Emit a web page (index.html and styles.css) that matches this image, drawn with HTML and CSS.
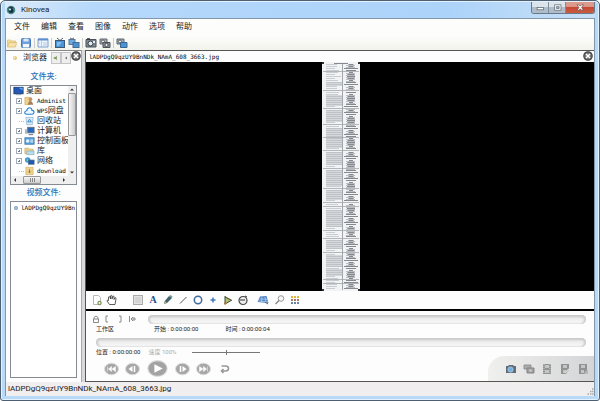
FILE: index.html
```html
<!DOCTYPE html>
<html lang="zh-CN">
<head>
<meta charset="utf-8">
<title>Kinovea</title>
<link rel="stylesheet" href="styles.css">
</head>
<body>
<div class="window">
  <header class="titlebar">
    <svg class="app-icon" viewBox="0 0 10 10"><circle cx="5" cy="5" r="4.3" fill="#4b8c91"/><path d="M1 4Q5-1 9 4L7 3H3z" fill="#23383d"/><circle cx="5" cy="5.5" r="2.5" fill="#17343d"/><circle cx="4" cy="4.5" r="1" fill="#dff"/></svg>
    <h1>Kinovea</h1>
    <div class="winbuttons">
      <button aria-label="最小化"><svg viewBox="0 0 16 12"><rect x="4.500" y="6" width="7" height="2.500" fill="#fff" stroke="#5c6670" stroke-width=".8"/></svg></button>
      <button aria-label="最大化"><svg viewBox="0 0 16 12"><path d="M5 3h7v6H5zM7 5h3v2H7z" fill="#fff" fill-rule="evenodd" stroke="#5c6670" stroke-width=".8"/></svg></button>
      <button class="shut" aria-label="关闭"><svg viewBox="0 0 28 12"><path d="M11 3h2l1.500 1.500L16 3h2l-2 3 2 3h-2l-1.500-1.500L13 9h-2l2-3z" fill="#fff" stroke="#5a4a50" stroke-width=".7"/></svg></button>
    </div>
  </header>
  <div class="client">
    <nav class="menu">
      <button>文件</button><button>编辑</button><button>查看</button><button>图像</button><button>动作</button><button>选项</button><button>帮助</button>
    </nav>
    <div class="toolbar">
      <button aria-label="打开"><svg viewBox="0 0 12 12"><path d="M1.500 9.500V3h3l1 1h4v1.500" fill="#f3dc9c" stroke="#dcc07b" stroke-width=".8"/><path d="M1.500 10l1.500-4.500h7.500l-1 4.500z" fill="#f6e2a8" stroke="#d9bd74" stroke-width=".8"/></svg></button>
      <button aria-label="保存"><svg viewBox="0 0 12 12"><rect x="1.500" y="1.500" width="9" height="9" rx="1" fill="#6d9fdc" stroke="#4377b8"/><path d="M3.500 1.500h5v3h-5z" fill="#d9e9fb"/><path d="M3 7h6v3.500H3z" fill="#f4f8fd"/></svg></button>
      <i class="sep"></i>
      <button aria-label="浏览器"><svg viewBox="0 0 12 12"><path d="M1 2h10v8H1z" fill="#eef5fd" stroke="#7ba0cf"/><path d="M1 2.500h10" stroke="#5e8fd0" stroke-width="2"/><path d="M4.500 4v6M2 6h1M6 6h4M6 8h4" stroke="#9cb7d8" stroke-width=".7"/></svg></button>
      <i class="sep"></i>
      <button aria-label="单屏"><svg viewBox="0 0 12 12"><path d="M3 1l3 2.500L9 1" fill="none" stroke="#56616d"/><rect x="1.500" y="3.500" width="9" height="7" fill="#4a93d4" stroke="#3c5a75"/><path d="M3 5h5l-3 4H3z" fill="#82bdf0"/></svg></button>
      <button aria-label="双屏"><svg viewBox="0 0 12 12"><rect x="1" y="2.500" width="6" height="5" fill="#6dabe2" stroke="#577899"/><rect x="5" y="5.500" width="6" height="5" fill="#4a93d4" stroke="#466b8c"/><path d="M2 1l2 1 2-1" fill="none" stroke="#667"/></svg></button>
      <i class="sep"></i>
      <button aria-label="单摄像头"><svg viewBox="0 0 12 12"><path d="M1 2.500h10V10H1z" fill="#7e8893" stroke="#49525b"/><path d="M2 2h3" stroke="#333" stroke-width="1.500"/><circle cx="5.500" cy="6.500" r="2.500" fill="#dfe6ec" stroke="#343c44"/><path d="M8 4h2v2H8z" fill="#e5ebf0"/></svg></button>
      <button aria-label="双摄像头"><svg viewBox="0 0 12 12"><path d="M1 2h7v5H1z" fill="#a2a9b0" stroke="#626a72"/><circle cx="4" cy="4.500" r="1.500" fill="#eee" stroke="#444" stroke-width=".7"/><path d="M4 5.500h7V10.500H4z" fill="#8b949c" stroke="#4a535b"/><circle cx="7.500" cy="8" r="1.600" fill="#eee" stroke="#333" stroke-width=".8"/></svg></button>
      <i class="sep"></i>
      <button aria-label="混合"><svg viewBox="0 0 12 12"><path d="M1 2h7v5H1z" fill="#9fa8b0" stroke="#5f6972"/><circle cx="4" cy="4.500" r="1.500" fill="#eee" stroke="#444" stroke-width=".7"/><path d="M4.500 5.500h6.500v5H4.500z" fill="#4a93d4" stroke="#3d668d"/></svg></button>
    </div>
    <main class="work">
      <aside class="explorer">
        <div class="tabs">
          <button class="tab"><svg viewBox="0 0 6 6"><circle cx="3" cy="3" r="2" fill="#e5c77a"/><circle cx="2.500" cy="2.500" r="1" fill="#f7e7b8"/></svg>浏览器</button>
          <button class="tab next" aria-label="快捷方式"><svg viewBox="0 0 6 8"><path d="M0 3h2l2-2v6L2 5H0z" fill="#78904f"/></svg></button>
          <button class="tab next" aria-label="向左"><svg viewBox="0 0 6 8"><path d="M4 2v4L2 4z" fill="#445"/></svg></button>
          <button class="close" aria-label="关闭面板"><svg viewBox="0 0 10 10"><circle cx="5" cy="5" r="4.200" fill="#777" stroke="#444" stroke-width="1.200"/><path d="M3 3l4 4M7 3L3 7" stroke="#fff" stroke-width="1.500"/></svg></button>
        </div>
        <h2>文件夹:</h2>
        <div class="treebox">
          <ul class="tree">
            <li class="root"><svg viewBox="0 0 12 10"><rect x="1" y="1" width="10" height="7" fill="#2458b5" stroke="#183b7d"/><path d="M6 1.500h4.500v3z" fill="#6ba4ef"/><path d="M3 9h6" stroke="#89a"/></svg>桌面</li>
            <li><i class="plus"></i><svg viewBox="0 0 12 10"><path d="M1 1h5v8H1z" fill="#eed28c" stroke="#c9a75b" stroke-width=".7"/><circle cx="7" cy="3" r="2" fill="#c99161"/><path d="M4 9q1-4 3-4t3 4z" fill="#a48058"/></svg><span class="mono">Administ</span></li>
            <li><i class="plus"></i><svg viewBox="0 0 12 10"><path d="M3 8.500C0 8.500 0 5 3 4.800 3.500 0 9 1 8.500 4c3 0 3.500 4.500 0 4.500z" fill="#eef8ff" stroke="#2680cf" stroke-width="1.200"/></svg><span class="mono">WPS</span>网盘</li>
            <li><i class="stub"></i><svg viewBox="0 0 12 10"><path d="M2 1h8L9 9H3z" fill="#dcecf8" stroke="#8ab0ce" stroke-width=".8"/><path d="M6 3l2 3H4z" fill="none" stroke="#3387cc"/></svg>回收站</li>
            <li><i class="plus"></i><svg viewBox="0 0 12 10"><rect x="4" y="1" width="7" height="6" fill="#2766bd" stroke="#5f7186"/><path d="M1 3h2.500v5H1z" fill="#aeb8c1"/><path d="M5 9h5" stroke="#567"/></svg>计算机</li>
            <li><i class="plus"></i><svg viewBox="0 0 12 10"><rect x="1" y="1.500" width="10" height="7" fill="#55a3df" stroke="#477ca9"/><circle cx="4" cy="5" r="2" fill="#dcf0ff"/><path d="M7 4h3M7 6h3" stroke="#fff"/></svg>控制面板</li>
            <li><i class="plus"></i><svg viewBox="0 0 12 10"><path d="M1 2h4l1 1h4v5H1z" fill="#efd287" stroke="#c4a456" stroke-width=".7"/><path d="M3 5h8v4H3z" fill="#b9dbea" stroke="#77a2b8" stroke-width=".6"/></svg>库</li>
            <li><i class="plus"></i><svg viewBox="0 0 12 10"><circle cx="4" cy="4" r="3" fill="#3c97d8"/><rect x="5" y="4" width="6" height="4.500" fill="#1d5cb5" stroke="#45627f" stroke-width=".8"/><path d="M3 2l2 2-2 2" fill="#7bce83"/></svg>网络</li>
            <li><i class="stub"></i><svg viewBox="0 0 12 10"><path d="M2 1h8v8H2z" fill="#efd48f" stroke="#cfae62" stroke-width=".7"/><path d="M6 3v4M4.500 5.500L6 7l1.500-1.500" fill="none" stroke="#9a772f"/></svg><span class="mono">download</span></li>
          </ul>
          <div class="vscroll"><svg viewBox="0 0 8 6"><path d="M2 4h4L4 2z" fill="#333"/></svg><i class="thumb"></i><svg class="end" viewBox="0 0 8 6"><path d="M2 2h4L4 4z" fill="#333"/></svg></div>
          <div class="hscroll"><svg viewBox="0 0 8 8"><path d="M5 2v4L3 4z" fill="#333"/></svg><i class="thumb"></i><svg class="end" viewBox="0 0 8 8"><path d="M3 2v4l2-2z" fill="#333"/></svg></div>
        </div>
        <h2>视频文件:</h2>
        <ul class="files"><li><svg viewBox="0 0 6 6"><circle cx="3" cy="3" r="2" fill="#7f9dba"/><circle cx="3" cy="3" r=".8" fill="#dbe8f3"/></svg><span class="mono">lADPDgQ9qzUY9Bn</span></li></ul>
      </aside>
      <section class="player">
        <div class="filebar">
          <span class="mono">lADPDgQ9qzUY9BnNDk_NAmA_608_3663.jpg</span>
          <button class="close" aria-label="关闭文件"><svg viewBox="0 0 10 10"><circle cx="5" cy="5" r="4.200" fill="#777" stroke="#444" stroke-width="1.200"/><path d="M3 3l4 4M7 3L3 7" stroke="#fff" stroke-width="1.500"/></svg></button>
        </div>
        <div class="viewer"><svg id="sheet" viewBox="0 0 38 229" preserveAspectRatio="none"></svg></div>
        <div class="drawtools">
          <button aria-label="新建关键帧"><svg viewBox="0 0 12 12"><path d="M2.500 1.500h5l2 2v7h-7z" fill="#fff" stroke="#b9b9b9"/><circle cx="8.500" cy="9" r="2.200" fill="#7c9155"/><path d="M8.500 7.800v2.400M7.300 9h2.400" stroke="#fff" stroke-width=".8"/></svg></button>
          <button class="hand" aria-label="移动"><svg viewBox="0 0 12 12"><path d="M3.500 10.500L1 7q0-1.500 1.500-.5L2.500 3q1-1 1.500 0l.5 2V1.800q1-1 1.500 0V5l.8-2.800q1-.7 1.200.5L8 5.500l1-1.800q1.200-.2 1 1L9 10.500z" fill="#fff" stroke="#333" stroke-width=".8"/></svg></button>
          <button aria-label="注释"><svg viewBox="0 0 12 12"><rect x="1.500" y="1.500" width="9" height="9" fill="#e4e4e4" stroke="#aaa"/><path d="M3 4h6M3 6h6M3 8h6" stroke="#bbb" stroke-width=".8"/></svg></button>
          <button class="letter" aria-label="文字">A</button>
          <button aria-label="铅笔"><svg viewBox="0 0 12 12"><path d="M2 10l.8-3L7 2l3 2-5 5z" fill="#3f626b"/><path d="M7 2l3 2 .5-1.500L8.500 1z" fill="#73989c"/><path d="M2 10l.8-3L5 9z" fill="#b9b189"/></svg></button>
          <button aria-label="直线"><svg viewBox="0 0 12 12"><path d="M3 9.500L9.500 3" stroke="#555"/></svg></button>
          <button aria-label="圆"><svg viewBox="0 0 12 12"><circle cx="6" cy="6" r="3.700" fill="none" stroke="#416b9f" stroke-width="1.500"/></svg></button>
          <button aria-label="标记"><svg viewBox="0 0 12 12"><path d="M6 3.500v5M3.500 6h5" stroke="#3f7ab9" stroke-width="1.500"/></svg></button>
          <button aria-label="角度"><svg viewBox="0 0 12 12"><path d="M3 2v8l7-4M3 3l6 3" fill="#b6bd70" stroke="#424a38"/><path d="M2 9.500h2" stroke="#b57930" stroke-width="2"/></svg></button>
          <button aria-label="秒表"><svg viewBox="0 0 12 12"><circle cx="6" cy="6.500" r="4" fill="#eee" stroke="#444" stroke-width="1.200"/><path d="M3 6h5M8 2l2 1" stroke="#333"/></svg></button>
          <button class="grid" aria-label="网格"><svg viewBox="0 0 12 12"><path d="M3 2.500l6.500-.5 2 7-6-.5-5-.5z" fill="#4f82c2"/><path d="M2.500 5l8 .2M1.500 7l9.500.8M5 3L4.500 8M8 3l1 6" stroke="#d4e3f5" stroke-width=".6"/><path d="M8 8l3 2" stroke="#456"/></svg></button>
          <button aria-label="放大镜"><svg viewBox="0 0 12 12"><circle cx="7" cy="4.500" r="2.800" fill="#f7f7f7" stroke="#999"/><path d="M5 6.500L1.500 10" stroke="#888" stroke-width="1.400"/></svg></button>
          <button aria-label="颜色配置"><svg viewBox="0 0 12 12" stroke-width="2" stroke-dasharray="2 1"><path d="M2 3h8" stroke="#dfb33c"/><path d="M2 6h8" stroke="#a67865"/><path d="M2 9h8" stroke="#6a83a2"/></svg></button>
        </div>
        <div class="controls">
          <div class="row zone">
            <svg viewBox="0 0 48 12" class="zonemarks"><g fill="none" stroke="#8a8a8a"><path d="M4 6V4.500Q6 1.500 8 4.500V6M3.500 6h5v3.500h-5z"/><path d="M18 3h-2v6h2M29 3h2v6h-2M39.500 3v6M41 6h5M43 4L41 6l2 2M44 4v4"/></g></svg>
            <div class="groove"></div>
          </div>
          <div class="labels first"><span>工作区</span><span>开始 : 0:00:00:00</span><span>时间 : 0:00:00:04</span></div>
          <div class="groove"></div>
          <div class="labels second"><span>位置 : 0:00:00:00</span><label for="speed">速度 100%</label><input id="speed" type="range" min="0" max="200" value="100"></div>
          <div class="transport">
            <button aria-label="首帧"><svg viewBox="0 0 16 14"><ellipse cx="8" cy="7" rx="7" ry="5.800" fill="#a7a7a7" stroke="#ddd"/><path d="M4 4.500v5M8 4.500v5L5 7zM12 4.500v5L8.500 7z" fill="#fff" stroke="#fff" stroke-width=".5"/></svg></button>
            <button aria-label="上一帧"><svg viewBox="0 0 16 14"><ellipse cx="8" cy="7" rx="7" ry="5.800" fill="#a7a7a7" stroke="#ddd"/><path d="M8 4v6L4 7z" fill="#fff"/><path d="M10 4v6" stroke="#fff" stroke-width="1.500"/></svg></button>
            <button class="play" aria-label="播放"><svg viewBox="0 0 20 18"><ellipse cx="10" cy="9" rx="9.200" ry="7.500" fill="#a3a3a3" stroke="#ddd"/><path d="M7 5l8 4-8 4z" fill="#fff"/></svg></button>
            <button aria-label="下一帧"><svg viewBox="0 0 16 14"><ellipse cx="8" cy="7" rx="7" ry="5.800" fill="#a7a7a7" stroke="#ddd"/><path d="M8 4v6l4-3z" fill="#fff"/><path d="M6 4v6" stroke="#fff" stroke-width="1.500"/></svg></button>
            <button aria-label="末帧"><svg viewBox="0 0 16 14"><ellipse cx="8" cy="7" rx="7" ry="5.800" fill="#a7a7a7" stroke="#ddd"/><path d="M12 4.500v5M8 4.500v5L11 7zM4 4.500v5L7.500 7z" fill="#fff" stroke="#fff" stroke-width=".5"/></svg></button>
            <button aria-label="循环"><svg viewBox="0 0 16 14"><path d="M5 4h4q3 0 3 2.500T9 9H5M7 7L5 9l2 2" fill="none" stroke="#999" stroke-width="1.600"/></svg></button>
            <div class="exports">
              <button aria-label="快照"><svg viewBox="0 0 12 12"><path d="M1 3h2l1-1h4l1 1h2v7H1z" fill="#626c76"/><circle cx="5.500" cy="6.500" r="2.600" fill="#72afe3" stroke="#bcd8ef" stroke-width=".7"/></svg></button>
              <button aria-label="连拍"><svg viewBox="0 0 12 12"><path d="M1 2h7v4H1z" fill="#aaa" stroke="#929292"/><path d="M4 5h7v5H4z" fill="#a0a0a0" stroke="#858585"/><circle cx="7.500" cy="7.500" r="1.300" fill="#ccc"/></svg></button>
              <button aria-label="视频"><svg viewBox="0 0 12 12"><path d="M2 1h8v10H2z" fill="#929292"/><path d="M4 2h4v3H4zM4 7h4v3H4z" fill="#c5c5c5"/><path d="M3 1v10M9 1v10" stroke="#ddd" stroke-width=".8" stroke-dasharray="1 1"/></svg></button>
              <button aria-label="幻灯片"><svg viewBox="0 0 12 12"><path d="M2 1h8v6l-3 4H2z" fill="#929292"/><path d="M4 2h4v3H4zM4 7h3v3H4z" fill="#c5c5c5"/><path d="M6 10l4-4" stroke="#ddd" stroke-width="1.200"/></svg></button>
              <button aria-label="暂停视频"><svg viewBox="0 0 12 12"><path d="M2 1h8v6l-3 4H2z" fill="#929292"/><path d="M4 2h4v3H4zM4 7h3v3H4z" fill="#c5c5c5"/><path d="M8 7v4M10 7v4" stroke="#999"/></svg></button>
            </div>
          </div>
        </div>
      </section>
    </main>
    <footer class="status"><span>lADPDgQ9qzUY9BnNDk_NAmA_608_3663.jpg</span><svg viewBox="0 0 8 8"><path d="M6 1h1.500M4 3.500h1.500M6 3.500h1.500M1.500 6h1.500M4 6h1.500M6 6h1.500" stroke="#aaa" stroke-width="1.300"/></svg></footer>
  </div>
</div>
<script src="script.js"></script>
</body>
</html>
```
FILE: styles.css
```css
* { box-sizing: border-box; }
body { margin: 0; font: 8px/10px Roboto, "Noto Sans CJK SC", sans-serif; color: #222; background: #fff; }
button { font: inherit; color: inherit; background: none; border: 0; padding: 0; margin: 0; display: flex; align-items: center; justify-content: center; }
svg { display: block; }
h1, h2, ul { margin: 0; padding: 0; font-size: 8px; font-weight: 400; list-style: none; }
.mono { font-family: "DejaVu Sans Mono", monospace; font-size: 6px; color: #000; white-space: nowrap; }

.window { height: 100vh; display: flex; flex-direction: column; padding: 1px 4px 4px; border: 1px solid #4d5f70; border-radius: 5px 5px 3px 3px; background: #b9d9f8; box-shadow: inset 0 0 0 1px #e4f2fd; }
.titlebar { height: 16px; flex: none; display: flex; align-items: center; background: linear-gradient(90deg, #dcebfa, #b5d8fb 15%, #acd3fa 75%, #c8e0f6); }
.app-icon { width: 10px; height: 10px; margin: 0 5px 0 1px; }
.titlebar h1 { flex: 1; }
.winbuttons { display: flex; align-self: flex-start; border: 1px solid #68798a; border-top: 0; border-radius: 0 0 3px 3px; overflow: hidden; }
.winbuttons button { width: 17px; height: 11px; background: linear-gradient(#dce4eb 45%, #aebdc9 50%); border-right: 1px solid #7f8e9c; }
.winbuttons svg { height: 11px; }
.winbuttons .shut { width: 28px; border: 0; background: linear-gradient(#dc9a8d 40%, #c54a35 50%, #c95b40); }

.client { flex: 1; min-height: 0; display: flex; flex-direction: column; border: 1px solid #8297aa; border-bottom: 0; background: #fdfdfc; }
.menu { display: flex; gap: 11px; padding: 0 8px; height: 16px; flex: none; }
.toolbar { display: flex; align-items: center; gap: 2px; height: 15px; flex: none; background: linear-gradient(#fdfdfc, #f3f3ed); }
.toolbar svg { width: 12px; height: 12px; }
.sep { width: 1px; height: 10px; background: #ccc; }

.work { flex: 1; min-height: 0; display: flex; gap: 3px; background: #d7d9dc; }
.explorer { width: 76px; flex: none; display: flex; flex-direction: column; padding: 0 4px 4px; border-top: 1px solid #888; border-right: 1px solid #aaa; background: #fdfdfd; }
.tabs { display: flex; align-items: center; height: 14px; flex: none; margin: 0 -4px 4px 0; }
.tab { gap: 5px; height: 12px; padding-left: 2px; }
.tab svg { width: 6px; height: 6px; }
.tab.next { padding: 0 1px; border: 1px solid #c5c5c5; background: #eee; }
.tab:nth-child(2) { margin-left: 4px; }
.close { align-self: flex-start; }
.close svg { width: 10px; height: 10px; }
.explorer h2 { height: 16px; flex: none; display: flex; align-items: center; justify-content: center; font-weight: 500; color: #2d72b5; }
.tree, .files { overflow: hidden; background: #fff; }
.treebox { display: grid; grid-template: 1fr 8px / 1fr 8px; height: 100px; flex: none; border: 1px solid #848b92; }
.tree li { display: flex; align-items: center; height: 10px; white-space: nowrap; }
.tree svg { width: 11px; height: 10px; margin-right: 2px; flex: none; }
.tree .root svg { margin-left: 2px; }
.plus { width: 6px; height: 6px; margin: 0 2px 0 5px; flex: none; border: 1px solid #a2adb8; background: linear-gradient(#68809c, #68809c) center / 2px 1px no-repeat, linear-gradient(#68809c, #68809c) center / 1px 2px no-repeat, #fff; }
.stub { width: 5px; height: 1px; margin: 0 0 0 8px; flex: none; border-top: 1px dotted #bbb; }
.vscroll, .hscroll { display: flex; background: #efefef; }
.vscroll { flex-direction: column; }
.vscroll svg { width: 8px; height: 7px; }
.hscroll svg { width: 8px; height: 8px; }
.thumb { border: 1px solid #999; border-radius: 1px; }
.vscroll .thumb { height: 43px; background: linear-gradient(90deg, #f7f7f7, #ccc); }
.hscroll { grid-column: 1 / 3; padding-right: 8px; }
.hscroll .thumb { width: 18px; margin-left: 4px; background: repeating-linear-gradient(90deg, #888 0 1px, transparent 1px 2px) center / 5px 4px no-repeat, linear-gradient(#f7f7f7, #ccc); }
.vscroll .end { margin-top: auto; }
.hscroll .end { margin-left: auto; }
.files { flex: 1; border: 1px solid #848b92; }
.files li { display: flex; align-items: center; gap: 2px; height: 11px; padding-left: 2px; }
.files svg { width: 6px; height: 6px; flex: none; }

.player { flex: 1; min-width: 0; display: flex; flex-direction: column; border: 1px solid #555; border-right: 0; background: #fdfdfd; }
.filebar { height: 11px; flex: none; display: flex; align-items: center; justify-content: space-between; padding: 0 1px 0 3px; }
.viewer { flex: 1; min-height: 0; display: flex; justify-content: center; padding-left: 1px; background: #000; }
.viewer svg { width: 38px; height: 100%; }
.drawtools { display: flex; align-items: center; gap: 3px; height: 20px; flex: none; padding: 0 5px 1px; border-bottom: 2px solid #000; }
.drawtools svg { width: 12px; height: 12px; }
.drawtools .hand { margin-right: 11px; }
.drawtools .grid { margin: 0 2px 0 5px; }
.letter { width: 12px; font: 700 10px/12px "Liberation Serif", serif; color: #255092; }

.controls { height: 70px; flex: none; display: flex; flex-direction: column; padding: 2px 8px 0; font-size: 6px; line-height: 8px; }
.row { display: flex; align-items: center; gap: 10px; height: 12px; }
.zonemarks { width: 48px; height: 12px; margin-left: -4px; }
.groove { flex: 1; height: 9px; border-radius: 5px; background: linear-gradient(#c2c2c2, #ececec 40%, #fbfbfb); box-shadow: inset 2px 0 2px #ccc, inset -2px 0 2px #ccc; }
.controls > .groove { flex: none; margin: 0 0 1px 2px; }
.labels { display: flex; align-items: center; height: 8px; flex: none; white-space: nowrap; }
.first { margin: 0 0 5px 2px; gap: 27px; }
.first span:first-child { width: 31px; }
.second { margin-left: 2px; gap: 8px; }
.second label { color: #aaa; }
.second input { appearance: none; width: 68px; height: 5px; margin: 0 0 0 8px; background: linear-gradient(#777, #777) center / 100% 1px no-repeat; }
.second input::-webkit-slider-thumb { appearance: none; width: 1px; height: 5px; background: #777; }
.transport { display: flex; align-items: center; gap: 4px; flex: 1; margin-right: -8px; padding-left: 9px; }
.transport svg { width: 17px; height: 14px; }
.transport .play { margin: 0 2px; }
.transport .play svg { width: 21px; height: 19px; }
.exports { align-self: stretch; margin-left: auto; display: flex; align-items: center; gap: 6px; padding: 0 5px 0 17px; border-radius: 16px 0 0 0; background: linear-gradient(90deg, #f0f0ee, #d4d5d7); }
.transport .exports svg { width: 12px; height: 12px; }

.status { height: 14px; flex: none; display: flex; align-items: center; justify-content: space-between; padding-left: 2px; background: #f0eeee; }
.status svg { width: 8px; height: 8px; align-self: flex-end; }
```
FILE: script.js
```js
// Draws the long two-column text sheet shown in the viewer.
const sheet = document.getElementById("sheet");
const NS = "http://www.w3.org/2000/svg";
function bar(x, y, w, h, fill) {
  const r = document.createElementNS(NS, "rect");
  Object.entries({ x, y, width: w, height: h, fill }).forEach(([k, v]) => r.setAttribute(k, v));
  sheet.appendChild(r);
}
bar(0, 0, 38, 229, "#f2f3f4");
const dense = [[20, 24], [33, 44], [48, 60], [66, 86], [90, 103], [108, 124], [128, 138], [148, 165], [178, 187], [193, 205], [207, 214]];
dense.forEach(([a, b]) => bar(4, a, 16, b - a, "#d6d9dc"));
for (let y = 2; y < 228; y += 2) {
  const heavy = dense.some(([a, b]) => y >= a && y < b);
  const n = (y * 37 + y * y * 3) % 11;
  bar(4, y, heavy ? 16 : 9 + n % 7, 1, heavy ? "#bfc3c8" : "#c9ccd0");
  if (n !== 3) bar(22 + n / 2, y, 14 - n, 1, "#85898e");
  if (n > 5) bar(24, y + 1, 9, 1, "#b9bcc0");
}
[9, 28, 46, 62, 75, 88, 106, 126, 140, 144, 168, 176, 190, 217, 221].forEach(y => bar(1, y, 36, 1, "#b4b7ba"));
bar(20, 1, 1, 227, "#a3a6aa");
bar(12, 1, 14, 1, "#85898e");
[[0, 0], [36, 0], [0, 227], [36, 227]].forEach(([x, y]) => bar(x, y, 2, 2, "#333"));
```
